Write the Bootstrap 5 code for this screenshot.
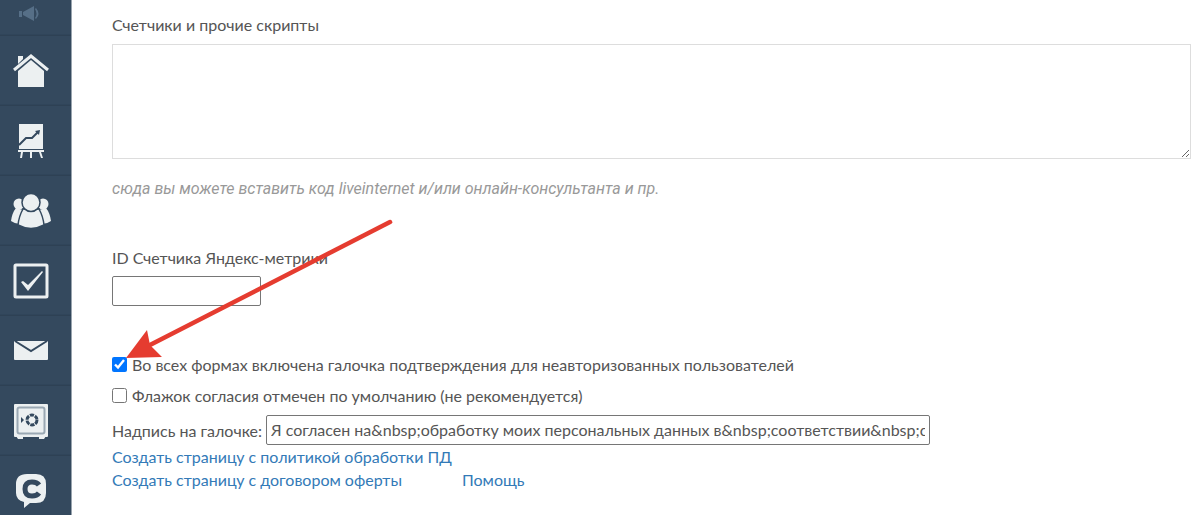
<!DOCTYPE html>
<html lang="ru">
<head>
<meta charset="utf-8">
<meta name="viewport" content="width=device-width, initial-scale=1">
<title>Настройки сайта</title>
<link rel="stylesheet" href="https://cdn.jsdelivr.net/npm/bootstrap@5.3.0/dist/css/bootstrap.min.css">
<style>
  body { font-family: Lato, Roboto, "Liberation Sans", sans-serif; font-size: 16px; line-height: 23px; color: #555; background: #fff; }
  .side-menu { flex: 0 0 72px; background: #34495e; border-right: 1px solid #99a4ae; }
  .side-menu a { flex: none; height: 70px; border-bottom: 1px solid #2e4154; box-shadow: inset 0 -1px #30455a; }
  .side-menu a.news { height: 36px; padding-bottom: 8px; }
  .side-menu svg { width: 36px; height: 36px; fill: #ecf0f1; margin-left: -10px; }
  .side-menu .wide-icon { width: 40px; }
  .side-menu .news svg { fill: #566f87; }
  .settings { padding: 13px 0 20px 40px; }
  .settings label { display: inline-block; }
  .scripts { height: 115px; border: 1px solid #ddd; margin-top: 8px; resize: both; }
  .hint { font-family: Roboto, "Liberation Sans", sans-serif; color: #999; margin-top: 18px; }
  .counter { margin-top: 46px; }
  .plain-box { height: 30px; border: 1px solid #767676; border-radius: 2px; padding: 0 4px 2px; color: #555; background: #fff; }
  .counter-id { width: 149px; margin-top: 7px; }
  .caption-text { width: 664px; }
  .consent { margin-top: 47px; gap: 8px; }
  .tick-row { gap: 5px; }
  .tick-row input { width: 15px; height: 15px; margin: 4px 0 0; accent-color: #0075ff; }
  .settings a { color: #337ab7; }
  .link-row { gap: 60px; }
  .pointer { left: 126px; top: 218px; pointer-events: none; }
</style>
</head>
<body>
<div class="d-flex vh-100 position-relative overflow-hidden">
  <nav class="side-menu d-flex flex-column overflow-hidden" aria-label="Разделы">
    <a href="#" class="news d-flex align-items-center justify-content-center" aria-label="Новости">
      <svg viewBox="0 0 36 36"><path d="M6 15h3v6H6zM10 16l11-6v15l-11-6z"/><path d="M23 12q5 6 0 11l-1-1q3-4 0-9z"/></svg></a>
    <a href="#" class="d-flex align-items-center justify-content-center" aria-label="Главная">
      <svg viewBox="0 0 36 36"><path d="M5 3h5v3l-5 5z"/><path d="M1 17L18 3l17 14" fill="none" stroke="#ecf0f1" stroke-width="3"/><path d="M5 18L18 7l13 11v16H5z"/></svg></a>
    <a href="#" class="d-flex align-items-center justify-content-center" aria-label="Статистика">
      <svg viewBox="0 0 36 36"><path d="M6 1h24v25H6zM5 27h26v2H5zM8 29h2l-1 6H7zM17 29h2v6h-2zM26 29h2l2 6h-2z"/><path d="M6 22l7-7h6l6-6" fill="none" stroke="#34495e" stroke-width="2"/><path d="M22 8l5-1-1 5z" fill="#34495e"/></svg></a>
    <a href="#" class="d-flex align-items-center justify-content-center" aria-label="Пользователи">
      <svg class="wide-icon" viewBox="0 0 40 36"><circle cx="8" cy="11" r="5.500"/><circle cx="32" cy="11" r="5.500"/><path d="M5 15Q1 20 0 28q4 3 9 3l3-14zM35 15q4 5 5 13-4 3-9 3l-3-14z"/><g stroke="#34495e" stroke-width="1.500"><path d="M12 16Q8 23 7 32q13 7 26 0-1-9-5-16z"/><circle cx="20" cy="9.500" r="9"/></g></svg></a>
    <a href="#" class="d-flex align-items-center justify-content-center" aria-label="Задачи">
      <svg viewBox="0 0 36 36"><rect x="2" y="2" width="32" height="32" rx="1" fill="none" stroke="#ecf0f1" stroke-width="3"/><path d="M8 19l2-1 5 4L29 8l1 1-15 19z"/></svg></a>
    <a href="#" class="d-flex align-items-center justify-content-center" aria-label="Почта">
      <svg viewBox="0 0 36 36"><rect x="1" y="8" width="34" height="19" rx="1"/><path d="M2 8l16 10L34 8" fill="none" stroke="#34495e" stroke-width="2"/></svg></a>
    <a href="#" class="d-flex align-items-center justify-content-center" aria-label="Касса">
      <svg viewBox="0 0 36 36"><rect x="1" y="1" width="34" height="33" rx="1"/><path d="M3 33h7v3H5zM26 33h7l-2 3h-5z"/><rect x="4.500" y="4.500" width="27" height="26" rx="2" fill="none" stroke="#9aa8b3" stroke-width="2"/><path d="M8 14l3 3-3 3z" fill="#34495e"/><circle cx="19" cy="17" r="5" fill="none" stroke="#34495e" stroke-width="3" stroke-dasharray="4.200 1"/></svg></a>
    <a href="#" class="d-flex align-items-center justify-content-center" aria-label="Чат">
      <svg viewBox="0 0 36 36"><path d="M14 1h9q10 0 10 10v9q0 10-10 10h-6l-6 5 0-6Q3 27 3 20v-9Q3 1 14 1z"/><path d="M26 12q-2-3-7-3-7 0-7 7t7 7q5 0 7-3" fill="none" stroke="#34495e" stroke-width="5"/></svg></a>
  </nav>

  <main class="settings flex-grow-1">
    <label for="scripts">Счетчики и прочие скрипты</label>
    <textarea id="scripts" class="scripts d-block w-100"></textarea>
    <p class="hint fst-italic mb-0">сюда вы можете вставить код liveinternet и/или онлайн-консультанта и пр.</p>

    <div class="counter">
      <label for="metrika">ID Счетчика Яндекс-метрики</label>
      <input type="text" id="metrika" class="plain-box counter-id d-block">
    </div>

    <div class="consent d-flex flex-column">
      <div class="tick-row d-flex align-items-start">
        <input type="checkbox" id="confirm" checked>
        <label for="confirm">Во всех формах включена галочка подтверждения для неавторизованных пользователей</label>
      </div>
      <div class="tick-row d-flex align-items-start">
        <input type="checkbox" id="agree">
        <label for="agree">Флажок согласия отмечен по умолчанию (не рекомендуется)</label>
      </div>
      <div class="d-flex align-items-center gap-1">
        <label for="caption">Надпись на галочке:</label>
        <input type="text" id="caption" class="plain-box caption-text" value="Я согласен на&amp;nbsp;обработку моих персональных данных в&amp;nbsp;соответствии&amp;nbsp;с&amp;nbsp;политикой">
      </div>
    </div>
    <div><a href="#" class="text-decoration-none">Создать страницу с политикой обработки ПД</a></div>
    <div class="link-row d-flex">
      <a href="#" class="text-decoration-none">Создать страницу с договором оферты</a>
      <a href="#" class="text-decoration-none">Помощь</a>
    </div>
  </main>

  <!-- red arrow lying over the form -->
  <svg class="pointer position-absolute" width="268" height="142" viewBox="0 0 268 142" aria-hidden="true">
    <path d="M22 128L264 4" stroke="#e53c30" stroke-width="4.500" stroke-linecap="round"/>
    <path d="M0 140L21 112l3 15 12 12z" fill="#e53c30"/>
  </svg>
</div>
<script src="https://cdn.jsdelivr.net/npm/bootstrap@5.3.0/dist/js/bootstrap.bundle.min.js"></script>
</body>
</html>
